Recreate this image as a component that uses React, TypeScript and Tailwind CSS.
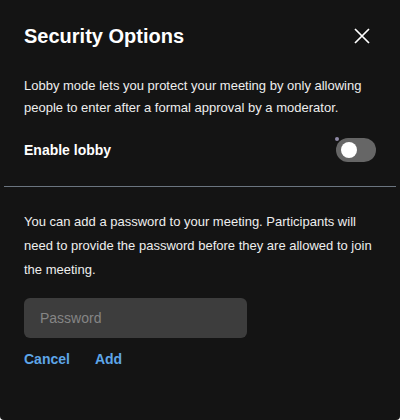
import { useState } from 'react';

export default function App() {
  const [lobby, setLobby] = useState(false);

  return (
    <div className="w-[400px] h-[420px] bg-[#141414] text-white font-['Liberation_Sans',Arial,sans-serif] rounded-b overflow-hidden">
      <div className="px-6 pt-[22px]">
        {/* header */}
        <div className="flex items-center justify-between h-7">
          <h1 className="text-[20px] font-bold leading-7">Security Options</h1>
          <button className="w-6 h-6 mr-[2px] flex items-center justify-center text-white">
            <svg width="24" height="24" viewBox="0 0 24 24" fill="none" stroke="currentColor" strokeWidth="1.7">
              <path d="M5 5l14 14M19 5L5 19" />
            </svg>
          </button>
        </div>

        <p className="mt-[25px] text-[13px] leading-[22px] text-[#eeeeee]">
          Lobby mode lets you protect your meeting by only allowing people to enter after a formal approval by a moderator.
        </p>

        <div className="mt-[19px] flex items-center justify-between h-6">
          <span className="text-sm font-bold">Enable lobby</span>
          <button
            onClick={() => setLobby(!lobby)}
            className={`relative w-10 h-6 rounded-full ${lobby ? 'bg-[#246fe5]' : 'bg-[#666666]'}`}
          >
            <span className="absolute -top-[1px] -left-[1px] w-[4px] h-[4px] rounded-full bg-[#8f8aa6]" />
            <span className={`absolute top-1 w-4 h-4 rounded-full bg-white ${lobby ? 'left-5' : 'left-[5px]'}`} />
          </button>
        </div>
      </div>

      <div className="mx-1 mt-6 h-px bg-[#6b7580]" />

      <div className="px-6 pt-[23px]">
        <p className="text-[13px] leading-6 text-[#eeeeee]">
          You can add a password to your meeting. Participants will need to provide the password before they are allowed to join the meeting.
        </p>

        <input
          placeholder="Password"
          className="mt-4 block w-[223px] h-10 rounded-md bg-[#3d3d3d] px-4 text-sm text-white placeholder:text-[#858585] outline-none"
        />

        <div className="mt-[11px] flex items-center gap-[25px] h-5 text-sm font-bold text-[#5ea6e8]">
          <button>Cancel</button>
          <button>Add</button>
        </div>
      </div>
    </div>
  );
}
